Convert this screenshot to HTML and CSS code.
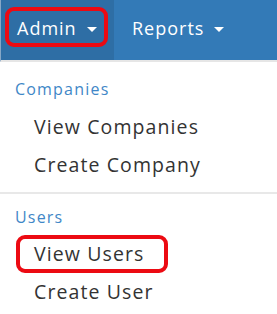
FILE: index.html
```html
<!DOCTYPE html>
<html>
<head>
<meta charset="utf-8">
<link rel="stylesheet" href="styles.css">
</head>
<body>
<nav class="navbar">
  <div class="tab tab-active">
    <span class="tab-label hl">Admin<span class="caret"></span></span>
  </div>
  <div class="tab tab-plain">
    <span class="tab-label">Reports<span class="caret"></span></span>
  </div>
</nav>
<div class="menu">
  <div class="header">Companies</div>
  <div class="item">View Companies</div>
  <div class="item">Create Company</div>
  <div class="divider"></div>
  <div class="header header-users">Users</div>
  <div class="item item-hl">View Users</div>
  <div class="item">Create User</div>
</div>
</body>
</html>
```
FILE: styles.css
```css
html, body {
  margin: 0;
  padding: 0;
  background: #fff;
  font-family: "Open Sans", "Noto Sans", sans-serif;
}
.navbar {
  display: flex;
  height: 60px;
  background: #337ab7;
  border-bottom: 2px solid #e6e6e6;
  border-left: 1px solid #86a7c6;
}
.tab {
  display: flex;
  align-items: flex-start;
  padding-top: 7px;
  box-sizing: border-box;
  color: #fff;
  font-size: 18px;
  letter-spacing: 1px;
}
.tab-active {
  width: 113px;
  background: #2e6ea5;
  padding-left: 4px;
}
.tab-plain {
  padding-left: 6px;
}
.tab-label {
  display: flex;
  align-items: center;
  height: 40px;
  box-sizing: border-box;
  border: 4px solid transparent;
  padding: 2px 10px 0 8px;
}
.hl {
  border-color: #ec0a12;
  border-radius: 9px;
  width: 103px;
}
.caret {
  width: 0;
  height: 0;
  border-left: 5px solid transparent;
  border-right: 5px solid transparent;
  border-top: 5px solid #fff;
  margin-left: 10px;
  margin-top: 2px;
}
.menu {
  padding-top: 16px;
}
.header {
  font-size: 16px;
  letter-spacing: 1.2px;
  color: #3f87c7;
  padding-left: 15px;
  line-height: 22px;
  margin-bottom: 8px;
}
.header-users {
  margin-top: 12px;
  margin-bottom: 7px;
}
.item {
  font-size: 19.5px;
  letter-spacing: 1.1px;
  color: #333;
  padding-left: 34px;
  line-height: 38px;
}
.divider {
  height: 2px;
  background: #e8e8e8;
  margin-top: 8px;
}
.item-hl {
  width: 152px;
  box-sizing: border-box;
  margin-left: 16px;
  padding-left: 14px;
  border: 4px solid #ec0a12;
  border-radius: 9px;
  line-height: 30px;
}
```
